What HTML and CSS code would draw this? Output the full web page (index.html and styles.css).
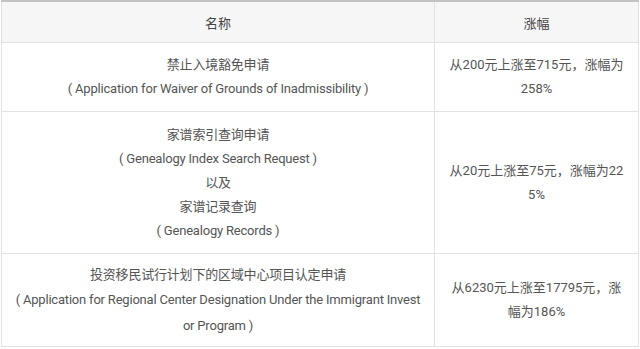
FILE: index.html
```html
<!DOCTYPE html>
<html lang="zh-CN">
<head>
<meta charset="utf-8">
<link rel="stylesheet" href="styles.css">
</head>
<body>
<table class="fees">
  <thead>
    <tr>
      <th class="col-name">名称</th>
      <th class="col-rise">涨幅</th>
    </tr>
  </thead>
  <tbody>
    <tr class="r1">
      <td class="col-name">
        <p>禁止入境豁免申请</p>
        <p>( Application for Waiver of Grounds of Inadmissibility )</p>
      </td>
      <td class="col-rise">从200元上涨至715元，涨幅为258%</td>
    </tr>
    <tr class="r2">
      <td class="col-name">
        <p>家谱索引查询申请</p>
        <p>( Genealogy Index Search Request )</p>
        <p>以及</p>
        <p>家谱记录查询</p>
        <p>( Genealogy Records )</p>
      </td>
      <td class="col-rise">从20元上涨至75元，涨幅为225%</td>
    </tr>
    <tr class="r3">
      <td class="col-name">
        <p>投资移民试行计划下的区域中心项目认定申请</p>
        <p>( Application for Regional Center Designation Under the Immigrant Investor Program )</p>
      </td>
      <td class="col-rise">从6230元上涨至17795元，涨幅为186%</td>
    </tr>
  </tbody>
</table>
</body>
</html>
```

FILE: styles.css
```css
html, body {
  margin: 0;
  padding: 0;
  background: #fff;
}
body {
  padding-left: 1px;
  font-family: Roboto, "Noto Sans CJK SC", sans-serif;
  font-size: 13px;
  color: #555;
}
.fees {
  width: 638px;
  border-collapse: collapse;
  border-top: 2px solid #c2c2c2;
  table-layout: fixed;
}
.fees th, .fees td {
  border: 1px solid #e2e2e2;
  text-align: center;
  vertical-align: middle;
  word-break: break-all;
}
.fees th {
  background: #f6f6f6;
  height: 40px;
  padding: 0;
  font-weight: normal;
  color: #444;
  font-size: 13px;
  border-top: none;
}
.fees .col-name { width: 432px; }
.fees td {
  padding: 10.5px 13px;
  line-height: 24px;
}
.fees td.col-name {
  letter-spacing: -0.2px;
}
.fees p { margin: 0; }
.fees .r1 td { padding-top: 10px; padding-bottom: 10px; }
.fees .r3 td { padding-top: 7.5px; padding-bottom: 7.5px; }
.fees .r3 td.col-name { line-height: 25.5px; }
```
